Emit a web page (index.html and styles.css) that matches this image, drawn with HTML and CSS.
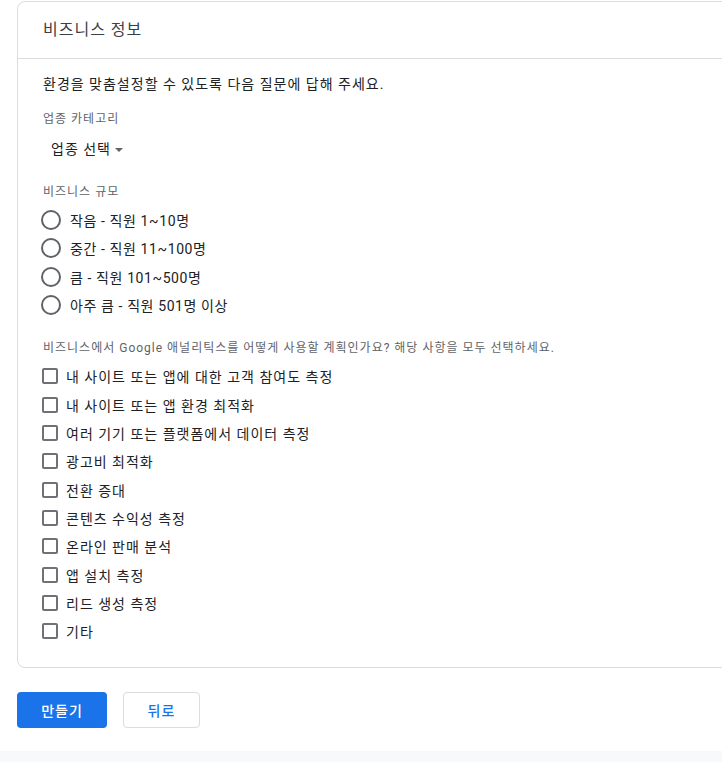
FILE: index.html
```html
<!DOCTYPE html>
<html lang="ko">
<head>
<meta charset="utf-8">
<title>비즈니스 정보</title>
<link rel="stylesheet" href="styles.css">
</head>
<body>
<div class="page">
  <section class="card">
    <header class="card-header">비즈니스 정보</header>
    <div class="card-body">
      <p class="desc">환경을 맞춤설정할 수 있도록 다음 질문에 답해 주세요.</p>

      <div class="label first">업종 카테고리</div>
      <div class="dropdown">업종 선택 <span class="caret"></span></div>

      <div class="label size-label">비즈니스 규모</div>
      <ul class="radios">
        <li><span class="radio"></span>작음 - 직원 1~10명</li>
        <li><span class="radio"></span>중간 - 직원 11~100명</li>
        <li><span class="radio"></span>큼 - 직원 101~500명</li>
        <li><span class="radio"></span>아주 큼 - 직원 501명 이상</li>
      </ul>

      <div class="label use-label">비즈니스에서 Google 애널리틱스를 어떻게 사용할 계획인가요? 해당 사항을 모두 선택하세요.</div>
      <ul class="checks">
        <li><span class="box"></span>내 사이트 또는 앱에 대한 고객 참여도 측정</li>
        <li><span class="box"></span>내 사이트 또는 앱 환경 최적화</li>
        <li><span class="box"></span>여러 기기 또는 플랫폼에서 데이터 측정</li>
        <li><span class="box"></span>광고비 최적화</li>
        <li><span class="box"></span>전환 증대</li>
        <li><span class="box"></span>콘텐츠 수익성 측정</li>
        <li><span class="box"></span>온라인 판매 분석</li>
        <li><span class="box"></span>앱 설치 측정</li>
        <li><span class="box"></span>리드 생성 측정</li>
        <li><span class="box"></span>기타</li>
      </ul>
    </div>
  </section>

  <div class="actions">
    <button class="btn primary">만들기</button>
    <button class="btn secondary">뒤로</button>
  </div>
</div>
<div class="footer-strip"></div>
</body>
</html>
```

FILE: styles.css
```css
html, body {
  margin: 0;
  padding: 0;
  overflow: hidden;
  background: #ffffff;
}

body {
  font-family: Roboto, "Noto Sans CJK KR", "Noto Sans", sans-serif;
  color: #202124;
  font-size: 14px;
  letter-spacing: 1px;
  width: 722px;
  height: 762px;
}

.page {
  padding: 1px 0 0 17px;
  height: 751px;
  box-sizing: border-box;
}

.card {
  width: 740px;
  border: 1px solid #dadce0;
  border-radius: 8px;
  box-sizing: border-box;
}

.card-header {
  height: 57px;
  border-bottom: 1px solid #dadce0;
  padding: 0 0 5px 25px;
  display: flex;
  align-items: center;
  font-size: 16px;
  color: #3c4043;
  box-sizing: border-box;
}

.card-body {
  padding: 15px 25px 21px 25px;
}

.desc {
  margin: 0;
  font-size: 14px;
  line-height: 20px;
  color: #202124;
}

.label {
  font-size: 12px;
  line-height: 16px;
  color: #5f6368;
}

.label.first {
  margin-top: 17px;
}

.dropdown {
  margin-top: 12px;
  padding-left: 8px;
  line-height: 20px;
  font-size: 14px;
  display: flex;
  align-items: center;
  color: #202124;
}

.caret {
  display: inline-block;
  width: 0;
  height: 0;
  margin-left: 4px;
  margin-top: 2px;
  border-left: 4px solid transparent;
  border-right: 4px solid transparent;
  border-top: 4px solid #5f6368;
}

.label.size-label {
  margin-top: 25px;
}

.radios, .checks {
  list-style: none;
  margin: 6px 0 0 0;
  padding: 0;
}

.radios li, .checks li {
  height: 28.33px;
  display: flex;
  align-items: center;
  font-size: 14px;
  color: #202124;
}

.radios li {
  letter-spacing: 0.6px;
}

.radio {
  width: 20px;
  height: 20px;
  border: 2px solid #5f6368;
  border-radius: 50%;
  box-sizing: border-box;
  margin-left: -2px;
  margin-right: 9px;
  flex: none;
}

.label.use-label {
  margin-top: 21px;
}

.box {
  width: 16px;
  height: 16px;
  border: 2px solid #6e7175;
  border-radius: 2px;
  box-sizing: border-box;
  margin-left: -1px;
  margin-right: 8px;
  flex: none;
}

.actions {
  display: flex;
  gap: 16px;
  margin-top: 24px;
}

.btn {
  height: 36px;
  border-radius: 4px;
  font-family: Roboto, "Noto Sans CJK KR", sans-serif;
  font-size: 14px;
  font-weight: 500;
  letter-spacing: 1px;
  cursor: pointer;
  box-sizing: border-box;
  padding: 0;
}

.btn.primary {
  width: 90px;
  background: #1a73e8;
  color: #ffffff;
  border: none;
}

.btn.secondary {
  width: 77px;
  background: #ffffff;
  color: #1a73e8;
  border: 1px solid #dadce0;
}

.footer-strip {
  height: 11px;
  background: #f8f9fa;
}
```
